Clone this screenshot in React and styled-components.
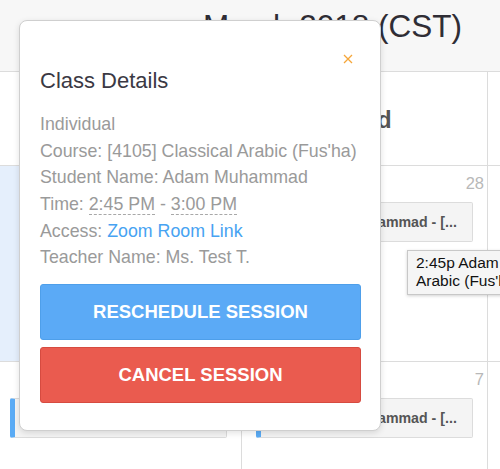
import React from 'react';
import styled, { createGlobalStyle } from 'styled-components';

const GlobalStyle = createGlobalStyle`
    html, body {
        margin: 0;
        padding: 0;
        background: #fff;
        font-family: "Liberation Sans", Arial, Helvetica, sans-serif;
    }
    #root {
        width: 500px;
        height: 469px;
        overflow: hidden;
        position: relative;
    }
`;

const Page = styled.div`
    position: relative;
    width: 500px;
    height: 469px;
    overflow: hidden;
`;

const Header = styled.div`
    height: 72px;
    background: #f7f7f7;
    border-bottom: 1px solid #dcdcdc;
    padding: 8px 0 0 203px;
    box-sizing: border-box;
`;

const MonthTitle = styled.h1`
    margin: 0;
    font-size: 31.5px;
    line-height: 36px;
    font-weight: 400;
    color: #2f2d35;
    white-space: nowrap;
`;

const Grid = styled.div`
    display: grid;
    grid-template-columns: 246px 246px 246px;
    grid-template-rows: 94px 196px 120px;
    margin-left: -4px;
`;

const Cell = styled.div`
    border-right: 1px solid #dcdcdc;
    border-bottom: 1px solid #dcdcdc;
    background: ${p => (p.today ? '#e5effc' : '#fff')};
    padding: 7px 3px 0 14px;
    box-sizing: border-box;
    display: flex;
    flex-direction: column;
    align-items: stretch;
`;

const DayName = styled.div`
    border-right: 1px solid #dcdcdc;
    border-bottom: 1px solid #dcdcdc;
    display: flex;
    align-items: center;
    justify-content: center;
    font-size: 24px;
    font-weight: 700;
    color: #555;
    padding: 3px 0 0 4px;
`;

const DayNum = styled.div`
    text-align: right;
    font-size: 16.5px;
    line-height: 20px;
    color: #b8b8b8;
    height: 20px;
`;

const Chip = styled.div`
    margin-top: 9px;
    margin-right: 11px;
    height: 40px;
    box-sizing: border-box;
    background: #f4f4f4;
    border: 1px solid #dcdcdc;
    border-left: 5px solid #5aabf5;
    border-radius: 2px;
    display: flex;
    align-items: center;
    padding-left: 4px;
    overflow: hidden;
    white-space: nowrap;
    font-size: 14.2px;
    font-weight: 700;
    color: #555;
`;

const Tooltip = styled.div`
    position: absolute;
    left: 407px;
    top: 250px;
    background: #f5f5f5;
    border: 1px solid #c8c8c8;
    box-shadow: 0 1px 3px rgba(0, 0, 0, 0.18);
    padding: 3px 8px 4px 8px;
    font-size: 15.5px;
    line-height: 18px;
    color: #111;
    white-space: nowrap;
`;

const Popover = styled.div`
    position: absolute;
    left: 19px;
    top: 20px;
    width: 362px;
    box-sizing: border-box;
    background: #fff;
    border: 1px solid #cfcfcf;
    border-radius: 8px;
    box-shadow: 0 2px 6px rgba(0, 0, 0, 0.12);
    padding: 20px;
`;

const CloseRow = styled.div`
    display: flex;
    justify-content: flex-end;
    align-items: flex-end;
    height: 23px;
    padding-right: 7px;
`;

const CloseButton = styled.button`
    border: 0;
    background: none;
    padding: 0;
    width: 10px;
    height: 10px;
    cursor: pointer;
    display: flex;
`;

const Title = styled.h2`
    margin: 5px 0 0 0;
    font-size: 22px;
    line-height: 24px;
    font-weight: 400;
    color: #3b3944;
`;

const Details = styled.div`
    margin-top: 18px;
    font-size: 17.8px;
    line-height: 26.67px;
    color: #9a9a9a;
`;

const Line = styled.div`
    white-space: nowrap;
`;

const Abbr = styled.span`
    border-bottom: 1px dashed #a8a8a8;
`;

const ZoomLink = styled.a`
    color: #47a3f2;
    text-decoration: none;
`;

const Actions = styled.div`
    margin-top: 13px;
    display: flex;
    flex-direction: column;
    gap: 7px;
    padding-bottom: 7px;
`;

const ActionButton = styled.button`
    height: 56px;
    width: 321px;
    box-sizing: border-box;
    border-radius: 3px;
    border: 1px solid ${p => (p.danger ? '#d64b40' : '#4e9fea')};
    background: ${p => (p.danger ? '#ea5b4f' : '#5baaf6')};
    color: #fff;
    font-family: "Liberation Sans", Arial, sans-serif;
    font-size: 18.5px;
    font-weight: 700;
    text-transform: uppercase;
    cursor: pointer;
`;

function CloseIcon() {
    return (
        <svg width="10" height="10" viewBox="0 0 10 10">
            <path d="M1 1 L9 9 M9 1 L1 9" stroke="#f5a63a" strokeWidth="1.3" fill="none" />
        </svg>
    );
}

const chipText = '2:45p Adam Muhammad - [...';

class App extends React.Component {
    render() {
        return (
            <Page>
                <GlobalStyle />
                <Header>
                    <MonthTitle>March 2018 (CST)</MonthTitle>
                </Header>
                <Grid>
                    <DayName>Tue</DayName>
                    <DayName>Wed</DayName>
                    <DayName />

                    <Cell today>
                        <DayNum>27</DayNum>
                    </Cell>
                    <Cell>
                        <DayNum>28</DayNum>
                        <Chip>{chipText}</Chip>
                    </Cell>
                    <Cell />

                    <Cell>
                        <DayNum>6</DayNum>
                        <Chip>{chipText}</Chip>
                    </Cell>
                    <Cell>
                        <DayNum>7</DayNum>
                        <Chip>{chipText}</Chip>
                    </Cell>
                    <Cell />
                </Grid>

                <Tooltip>
                    2:45p Adam Muhammad - [4105] Classical<br />
                    Arabic (Fus'ha)
                </Tooltip>

                <Popover>
                    <CloseRow>
                        <CloseButton aria-label="Close"><CloseIcon /></CloseButton>
                    </CloseRow>
                    <Title>Class Details</Title>
                    <Details>
                        <Line>Individual</Line>
                        <Line>Course: [4105] Classical Arabic (Fus'ha)</Line>
                        <Line>Student Name: Adam Muhammad</Line>
                        <Line>Time: <Abbr>2:45 PM</Abbr> - <Abbr>3:00 PM</Abbr></Line>
                        <Line>Access: <ZoomLink href="#">Zoom Room Link</ZoomLink></Line>
                        <Line>Teacher Name: Ms. Test T.</Line>
                    </Details>
                    <Actions>
                        <ActionButton>Reschedule Session</ActionButton>
                        <ActionButton danger>Cancel Session</ActionButton>
                    </Actions>
                </Popover>
            </Page>
        );
    }
}

export default App;
